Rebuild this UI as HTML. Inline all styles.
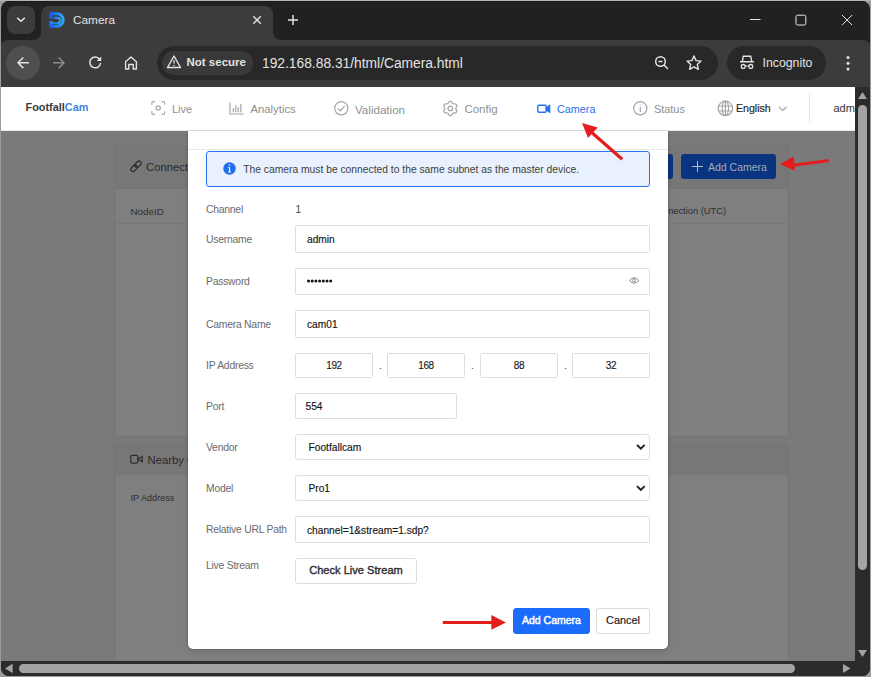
<!DOCTYPE html>
<html><head><meta charset="utf-8">
<style>
*{box-sizing:border-box;margin:0;padding:0}
html,body{width:871px;height:677px;overflow:hidden;background:linear-gradient(#b5b5b5 0 1px,#9c9c9c 1px);font-family:"Liberation Sans",sans-serif}
.a{position:absolute}
#win{position:absolute;left:0;top:0;width:871px;height:677px;background:#202121;clip-path:inset(1px 1px 1px 1px round 8px)}
.t{position:absolute;white-space:nowrap;line-height:1}
svg{position:absolute;overflow:visible}
.lb{left:206px;font-size:10.4px;letter-spacing:-0.25px;color:#6b6b6b}
.inp{position:absolute;left:295px;width:355px;border:1px solid #dedede;border-radius:1.5px;background:#fff}
.inp span{position:absolute;left:11px;top:50%;transform:translateY(-40%);font-size:10.2px;color:#151515;-webkit-text-stroke:0.15px #151515;white-space:nowrap;line-height:1}
.ipb{position:absolute;top:353px;width:78px;height:25px;border:1px solid #dedede;border-radius:1.5px;background:#fff;font-size:10px;letter-spacing:-0.4px;color:#151515;-webkit-text-stroke:0.1px #151515;text-align:center;line-height:24px}
.btn{border:1px solid #dcdcdc;border-radius:3px;background:#fff;display:flex;align-items:center;justify-content:center;white-space:nowrap;line-height:1}
</style></head><body>
<div id="win">
  <div class="a" style="left:0;top:1px;width:871px;height:1px;background:#191a1a"></div>
  <!-- tab strip -->
  <div class="a" style="left:7px;top:6px;width:28px;height:28px;border-radius:8px;background:#3c3c3c"></div>
  <svg style="left:0;top:0" width="1" height="1"><path d="M17.2 17.7 L21 21.3 L24.8 17.7" fill="none" stroke="#e8e8e8" stroke-width="1.5"/></svg>
  <div class="a" style="left:41px;top:6px;width:232px;height:34px;border-radius:8px 8px 0 0;background:#3c3c3c"></div>
  <div class="a" style="left:33px;top:32px;width:8px;height:8px;background:radial-gradient(circle at 0 0,#202121 7.5px,#3c3c3c 8.5px)"></div>
  <div class="a" style="left:273px;top:32px;width:8px;height:8px;background:radial-gradient(circle at 100% 0,#202121 7.5px,#3c3c3c 8.5px)"></div>
  <!-- favicon -->
  <svg style="left:0;top:0" width="1" height="1">
    <defs><linearGradient id="fg" x1="0" x2="1" y1="0" y2="0"><stop offset="0" stop-color="#1560f0"/><stop offset="1" stop-color="#2aa8f8"/></linearGradient></defs>
    <path d="M50.9 18.7 V13.8 H57 A6.2 6.2 0 0 1 57 26.2 H50.9 V21" fill="none" stroke="url(#fg)" stroke-width="3"/>
    <path d="M53.7 17.8 H57.3 A2.75 2.75 0 0 1 57.3 23.3 H49.4" fill="none" stroke="url(#fg)" stroke-width="1.9"/>
    <rect x="49.4" y="21" width="3" height="3.3" fill="url(#fg)"/>
  </svg>
  <div class="t" style="left:73px;top:15px;font-size:11.8px;color:#e3e3e3">Camera</div>
  <svg style="left:0;top:0" width="1" height="1"><path d="M253.3 16.2 L260.8 23.7 M260.8 16.2 L253.3 23.7" stroke="#e3e3e3" stroke-width="1.4"/></svg>
  <svg style="left:0;top:0" width="1" height="1"><path d="M288 19.9 H298 M293 14.9 V24.9" stroke="#e3e3e3" stroke-width="1.5"/></svg>
  <!-- window controls -->
  <svg style="left:0;top:0" width="1" height="1">
    <path d="M750 19.5 H760.5" stroke="#e8e8e8" stroke-width="1"/>
    <rect x="796" y="15.2" width="9.8" height="9.8" rx="1.5" fill="none" stroke="#e8e8e8" stroke-width="1"/>
    <path d="M842 15 L852.2 25.2 M852.2 15 L842 25.2" stroke="#e8e8e8" stroke-width="1"/>
  </svg>

  <!-- toolbar -->
  <div class="a" style="left:0;top:40px;width:871px;height:47px;background:#3c3c3c;border-radius:8px 8px 0 0"></div>
  <div class="a" style="left:6px;top:46px;width:34px;height:34px;border-radius:50%;background:#4f4f4f"></div>
  <svg style="left:0;top:0" width="1" height="1">
    <path d="M18 62.8 H29 M23.3 57.5 L18 62.8 L23.3 68.1" fill="none" stroke="#e3e3e3" stroke-width="1.5"/>
    <path d="M53 62.8 H64 M58.7 57.5 L64 62.8 L58.7 68.1" fill="none" stroke="#8a8a8a" stroke-width="1.5"/>
    <path d="M99.6 59.2 A5.4 5.4 0 1 0 100.6 63" fill="none" stroke="#e3e3e3" stroke-width="1.5"/>
    <path d="M96.8 61 H101.2 V56.6 Z" fill="#e3e3e3"/>
    <path d="M125.6 69 V61.8 L131 57 L136.4 61.8 V69 H133.2 V64.5 H128.8 V69 Z" fill="none" stroke="#e3e3e3" stroke-width="1.4" stroke-linejoin="round"/>
  </svg>
  <!-- omnibox -->
  <div class="a" style="left:157px;top:46px;width:561px;height:34px;border-radius:17px;background:#282828"></div>
  <div class="a" style="left:162px;top:51px;width:91px;height:24px;border-radius:12px;background:#393939"></div>
  <svg style="left:0;top:0" width="1" height="1">
    <path d="M174 56 L180.5 67.5 H167.5 Z" fill="none" stroke="#e3e3e3" stroke-width="1.4" stroke-linejoin="round"/>
    <path d="M174 60 V63.5 M174 65 V66" stroke="#e3e3e3" stroke-width="1.3"/>
  </svg>
  <div class="t" style="left:186.5px;top:57px;font-size:11.5px;font-weight:bold;color:#e3e3e3">Not secure</div>
  <div class="t" style="left:262px;top:56.5px;font-size:13.8px;color:#e3e3e3">192.168.88.31/html/Camera.html</div>
  <svg style="left:0;top:0" width="1" height="1">
    <circle cx="660.5" cy="61.5" r="4.8" fill="none" stroke="#e3e3e3" stroke-width="1.5"/>
    <path d="M658.5 61.5 H662.5 M664 65 L668 69" stroke="#e3e3e3" stroke-width="1.5"/>
    <path d="M694 56 L696.1 60.6 L701 61.1 L697.3 64.4 L698.4 69.3 L694 66.8 L689.6 69.3 L690.7 64.4 L687 61.1 L691.9 60.6 Z" fill="none" stroke="#e3e3e3" stroke-width="1.4" stroke-linejoin="round"/>
  </svg>
  <!-- incognito -->
  <div class="a" style="left:727px;top:46px;width:99px;height:34px;border-radius:17px;background:#282828"></div>
  <svg style="left:0;top:0" width="1" height="1">
    <path d="M740 61.8 H754 M742.2 61.8 L743.3 56.3 H750.7 L751.8 61.8" fill="none" stroke="#e3e3e3" stroke-width="1.4"/>
    <circle cx="743.2" cy="66.4" r="1.9" fill="none" stroke="#e3e3e3" stroke-width="1.3"/>
    <circle cx="750.8" cy="66.4" r="1.9" fill="none" stroke="#e3e3e3" stroke-width="1.3"/>
    <path d="M745 66 H749" stroke="#e3e3e3" stroke-width="1.2"/>
  </svg>
  <div class="t" style="left:762.5px;top:57px;font-size:12.3px;color:#e3e3e3">Incognito</div>
  <svg style="left:0;top:0" width="1" height="1">
    <circle cx="848" cy="57.5" r="1.5" fill="#e3e3e3"/><circle cx="848" cy="63.2" r="1.5" fill="#e3e3e3"/><circle cx="848" cy="68.9" r="1.5" fill="#e3e3e3"/>
  </svg>

  <!-- page -->
  <div id="page" class="a" style="left:0;top:87px;width:855px;height:574px;background:#7a7a7a;overflow:hidden">
  <div class="a" style="left:0;top:-87px;width:871px;height:677px">
    <!-- BG CARDS -->
    <div class="a" style="left:114px;top:146px;width:675px;height:291px;background:#7f7f7f;border:1px solid #747474"></div>
    <div class="a" style="left:115px;top:147px;width:673px;height:42px;background:#777777;border-bottom:1px solid #747474"></div>
    <svg style="left:0;top:0" width="1" height="1"><g fill="none" stroke="#2e2e2e" stroke-width="1.3" transform="rotate(45 136 166.3)">
      <rect x="133.8" y="159.9" width="4.4" height="7.2" rx="2.2"/>
      <rect x="133.8" y="165.5" width="4.4" height="7.2" rx="2.2"/></g></svg>
    <div class="t" style="left:146px;top:161.5px;font-size:11.3px;color:#2a2a2a">Connected</div>
    <div class="a" style="left:600px;top:154px;width:73px;height:25px;border-radius:3px;background:#0b3480"></div>
    <div class="a" style="left:681px;top:154px;width:95px;height:25px;border-radius:3px;background:#0b3480"></div>
    <svg style="left:0;top:0" width="1" height="1"><path d="M692 166.5 H703 M697.5 161 V172" stroke="#b8bcc4" stroke-width="1"/></svg>
    <div class="t" style="left:708px;top:161.5px;font-size:10.5px;color:#a5aab2">Add Camera</div>
    <div class="t" style="left:130.5px;top:207px;font-size:9.8px;color:#2e2e2e">NodeID</div>
    <div class="t" style="right:145px;top:207px;font-size:9.3px;color:#2e2e2e">Last Connection (UTC)</div>
    <div class="a" style="left:115px;top:223px;width:673px;height:1px;background:#767676"></div>
    <div class="a" style="left:763px;top:223px;width:1px;height:1px;background:#7f7f7f"></div>
    <div class="a" style="left:114px;top:444px;width:675px;height:240px;background:#7f7f7f;border:1px solid #747474"></div>
    <div class="a" style="left:115px;top:445px;width:673px;height:30px;background:#777777"></div>
    <svg style="left:0;top:0" width="1" height="1"><g fill="none" stroke="#2e2e2e" stroke-width="1.2">
      <rect x="130.8" y="455.3" width="7" height="7.8" rx="1.2"/><path d="M137.8 459.2 L142.2 456.6 V461.8 Z"/></g></svg>
    <div class="t" style="left:147.5px;top:455px;font-size:11.3px;color:#2a2a2a">Nearby Cameras</div>
    <div class="t" style="left:130.5px;top:493.5px;font-size:9.1px;color:#2e2e2e">IP Address</div>

    <!-- HEADER -->
    <div class="a" style="left:0;top:87px;width:871px;height:44px;background:#fff;border-bottom:1px solid #e8e8e8"></div>
    <div class="t" style="left:25.5px;top:102px;font-size:10.9px;font-weight:bold;color:#3a3a3a">Footfall<span style="color:#4483dc">Cam</span></div>

    <!-- NAV -->
    <svg style="left:0;top:0" width="1" height="1"><g fill="none" stroke="#a6a6a6" stroke-width="1.2">
      <path d="M151.8 104.8 V103 A1.3 1.3 0 0 1 153.1 101.7 H155 M161.4 101.7 H163.3 A1.3 1.3 0 0 1 164.6 103 V104.8 M164.6 111.2 V113 A1.3 1.3 0 0 1 163.3 114.3 H161.4 M155 114.3 H153.1 A1.3 1.3 0 0 1 151.8 113 V111.2"/>
      <circle cx="158.2" cy="108" r="2.2"/>
      <path d="M230 102.4 V114 H243.8 M233.4 112.2 V108 M235.8 112.2 V105.2 M238.2 112.2 V107 M240.8 112.2 V104"/>
      <circle cx="341.3" cy="108.3" r="6.6"/>
      <path d="M338 108.5 L340.4 110.8 L344.6 106"/>
      <path d="M449.36 101.26 L451.24 101.26 L452.44 103.23 L453.71 103.96 L456.01 104.02 L456.95 105.64 L455.85 107.67 L455.85 109.13 L456.95 111.16 L456.01 112.78 L453.71 112.84 L452.44 113.57 L451.24 115.54 L449.36 115.54 L448.16 113.57 L446.89 112.84 L444.59 112.78 L443.65 111.16 L444.75 109.13 L444.75 107.67 L443.65 105.64 L444.59 104.02 L446.89 103.96 L448.16 103.23 Z" stroke-linejoin="round"/>
      <circle cx="450.3" cy="108.4" r="2.3"/>
      <circle cx="640.3" cy="108.3" r="6.6"/>
      <path d="M640.3 107 V112 M640.3 104.5 V105.5"/>
      <circle cx="725.4" cy="108.4" r="7.2"/>
      <ellipse cx="725.4" cy="108.4" rx="3.2" ry="7.2"/>
      <path d="M718.5 106 H732.3 M718.5 111 H732.3 M725.4 101.2 V115.6"/>
      <path d="M779 107 L782.7 110.5 L786.4 107"/>
    </g>
    <g fill="none" stroke="#2b6ff0" stroke-width="1.4">
      <rect x="537.8" y="105.3" width="8.4" height="7" rx="1"/>
      <path d="M546.2 108 L549.6 105.6 V112.2 L546.2 109.6 Z" fill="#2b6ff0"/>
    </g></svg>
    <div class="t" style="left:172px;top:103.5px;font-size:11px;color:#8f8f8f">Live</div>
    <div class="t" style="left:250.5px;top:103.5px;font-size:11.3px;color:#8f8f8f">Analytics</div>
    <div class="t" style="left:355px;top:103.5px;font-size:11.6px;color:#8f8f8f">Validation</div>
    <div class="t" style="left:464.5px;top:103.5px;font-size:11.45px;color:#8f8f8f">Config</div>
    <div class="t" style="left:557px;top:103.5px;font-size:10.8px;color:#2b6ff0">Camera</div>
    <div class="t" style="left:654px;top:103.5px;font-size:10.9px;color:#8f8f8f">Status</div>
    <div class="t" style="left:736px;top:103px;font-size:10.6px;color:#2a2a2a;-webkit-text-stroke:0.2px #2a2a2a">English</div>
    <div class="a" style="left:809px;top:93px;width:1px;height:30px;background:#e4e4e4"></div>
    <div class="t" style="left:833.5px;top:103px;font-size:11px;color:#333">admin</div>

    <!-- MODAL -->
    <div class="a" style="left:188px;top:131px;width:480px;height:518px;background:#fff;border-radius:0 0 5px 5px;box-shadow:0 0 1.5px rgba(0,0,0,0.35),0 3px 6px rgba(0,0,0,0.12)"></div>
    <div class="a" style="left:188px;top:149px;width:480px;height:1px;background:#e8e8e8"></div>
    <!-- alert -->
    <div class="a" style="left:206px;top:151px;width:444px;height:36px;background:#e8f1fd;border:1px solid #2474ec;border-radius:3px"></div>
    <svg style="left:0;top:0" width="1" height="1"><circle cx="229.5" cy="168.5" r="6.2" fill="#1f6ff0"/>
      <path d="M229.5 167.5 V172 M228 172 H231 M228.3 167.5 H229.5" stroke="#fff" stroke-width="1.1" fill="none"/><circle cx="229.5" cy="165" r="0.8" fill="#fff"/></svg>
    <div class="t" style="left:243.2px;top:165.2px;font-size:10.3px;color:#3e3e3e">The camera must be connected to the same subnet as the master device.</div>
    <!-- labels -->
    <div class="t lb" style="top:205px">Channel</div>
    <div class="t" style="left:295.5px;top:205px;font-size:10px;color:#444">1</div>
    <div class="t lb" style="top:235px">Username</div>
    <div class="inp" style="top:225px;height:28px"><span>admin</span></div>
    <div class="t lb" style="top:277px">Password</div>
    <div class="inp" style="top:268px;height:27px"></div>
    <svg style="left:0;top:0" width="1" height="1"><g fill="#111">
      <circle cx="308.5" cy="281" r="1.5"/><circle cx="312.2" cy="281" r="1.5"/><circle cx="315.9" cy="281" r="1.5"/><circle cx="319.6" cy="281" r="1.5"/><circle cx="323.3" cy="281" r="1.5"/><circle cx="327" cy="281" r="1.5"/><circle cx="330.7" cy="281" r="1.5"/></g>
      <g fill="none" stroke="#7a7a7a" stroke-width="0.9"><path d="M629.6 280.5 Q634.2 275 638.8 280.5 Q634.2 286 629.6 280.5 Z"/><circle cx="634.2" cy="280.4" r="1.4"/></g></svg>
    <div class="t lb" style="top:320px">Camera Name</div>
    <div class="inp" style="top:310px;height:28px"><span>cam01</span></div>
    <div class="t lb" style="top:361px">IP Address</div>
    <div class="ipb" style="left:295px">192</div>
    <div class="ipb" style="left:387px">168</div>
    <div class="ipb" style="left:480px">88</div>
    <div class="ipb" style="left:572px">32</div>
    <div class="t" style="left:379px;top:361px;font-size:10px;color:#333">.</div>
    <div class="t" style="left:471px;top:361px;font-size:10px;color:#333">.</div>
    <div class="t" style="left:564px;top:361px;font-size:10px;color:#333">.</div>
    <div class="t lb" style="top:402px">Port</div>
    <div class="inp" style="top:393px;height:26px;width:162px"><span style="left:9.5px">554</span></div>
    <div class="t lb" style="top:443px">Vendor</div>
    <div class="inp" style="top:434px;height:26px;border-radius:3px"><span style="left:12.5px">Footfallcam</span></div>
    <div class="t lb" style="top:484px">Model</div>
    <div class="inp" style="top:475px;height:26px;border-radius:3px"><span style="left:12.5px">Pro1</span></div>
    <svg style="left:0;top:0" width="1" height="1"><g fill="none" stroke="#222" stroke-width="2">
      <path d="M637 444.9 L640.8 448.7 L644.6 444.9"/><path d="M637 486.1 L640.8 489.9 L644.6 486.1"/></g></svg>
    <div class="t lb" style="top:525px">Relative URL Path</div>
    <div class="inp" style="top:516px;height:27px"><span>channel=1&amp;stream=1.sdp?</span></div>
    <div class="t lb" style="top:561px">Live Stream</div>
    <div class="a btn" style="left:295px;top:558px;width:122px;height:26px"><span style="font-size:11.1px;color:#2a2a2a;-webkit-text-stroke:0.35px #2a2a2a">Check Live Stream</span></div>
    <div class="a btn" style="left:513px;top:608px;width:77px;height:26px;background:#1b6cfb;border-color:#1b6cfb"><span style="font-size:10.5px;color:#fff;-webkit-text-stroke:0.45px #fff;position:relative;top:-0.4px">Add Camera</span></div>
    <div class="a btn" style="left:596px;top:608px;width:54px;height:26px"><span style="font-size:10.9px;color:#222;-webkit-text-stroke:0.2px #222;position:relative;top:-0.6px">Cancel</span></div>
  </div>
  </div>

  <!-- arrows -->
  <svg style="left:0;top:0" width="1" height="1"><g fill="#e41e1e" stroke="none">
    <path d="M622.2 159.2 L589.5 130.5" stroke="#e41e1e" stroke-width="3.2"/>
    <path d="M582 123 L597.7 127.5 L588 137.9 Z"/>
    <path d="M828.7 160.5 L792 165.5" stroke="#e41e1e" stroke-width="3.2"/>
    <path d="M780 164.3 L793.7 156.3 L795 170.7 Z"/>
    <path d="M442.8 622.4 H493" stroke="#e41e1e" stroke-width="3"/>
    <path d="M505.9 622.4 L491.3 615.1 V629.8 Z"/>
  </g></svg>
  <!-- scrollbars -->
  <div class="a" style="left:855px;top:87px;width:16px;height:590px;background:#2b2b2b"></div>
  <div class="a" style="left:0;top:661px;width:871px;height:16px;background:#2b2b2b"></div>
  <svg style="left:0;top:0" width="1" height="1">
    <path d="M862.5 92 L867 99 H858 Z" fill="#a3a3a3"/>
    <path d="M862.5 657 L867 650 H858 Z" fill="#a3a3a3"/>
    <path d="M5 668.4 L12.6 663.8 V673 Z" fill="#a3a3a3"/>
    <path d="M850.5 668.5 L843 664 V673 Z" fill="#a3a3a3"/>
  </svg>
  <div class="a" style="left:858px;top:105px;width:9px;height:465px;border-radius:4.5px;background:#a3a3a3"></div>
  <div class="a" style="left:19px;top:664px;width:776px;height:9px;border-radius:4.5px;background:#a3a3a3"></div>
</div>
</body></html>
